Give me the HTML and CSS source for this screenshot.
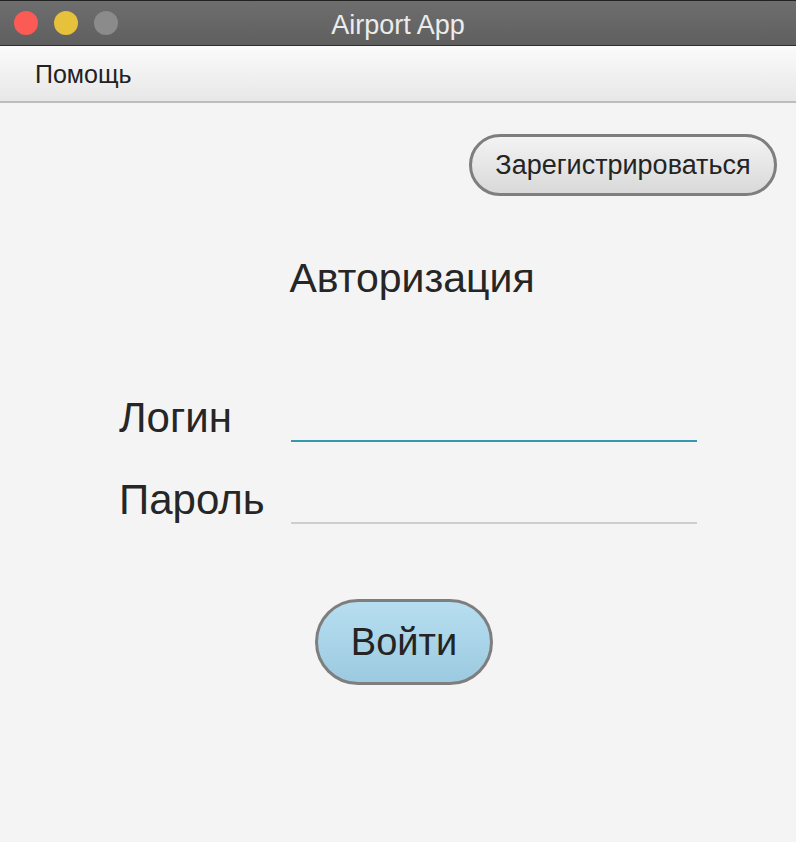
FILE: index.html
```html
<!DOCTYPE html>
<html lang="ru">
<head>
<meta charset="utf-8">
<title>Airport App</title>
<link rel="stylesheet" href="styles.css">
</head>
<body>
<div class="window">
  <header class="titlebar">
    <div class="lights">
      <span class="light red"></span>
      <span class="light yellow"></span>
      <span class="light gray"></span>
    </div>
    <div class="title">Airport App</div>
  </header>
  <nav class="menubar">
    <span class="menu-item">Помощь</span>
  </nav>
  <main class="content">
    <div class="top-row">
      <button class="btn btn-register" type="button">Зарегистрироваться</button>
    </div>
    <h1 class="heading">Авторизация</h1>
    <form class="form">
      <div class="field">
        <label class="label">Логин</label>
        <div class="input focused"></div>
      </div>
      <div class="field">
        <label class="label">Пароль</label>
        <div class="input"></div>
      </div>
    </form>
    <div class="actions">
      <button class="btn btn-login" type="button">Войти</button>
    </div>
  </main>
</div>
</body>
</html>
```

FILE: styles.css
```css
* { box-sizing: border-box; }
html, body { margin: 0; padding: 0; }
body {
  background: #f4f4f4;
  font-family: "Liberation Sans", Arial, sans-serif;
  color: #262626;
}
.window { width: 796px; height: 842px; background: #f4f4f4; }

.titlebar {
  height: 46px;
  background: linear-gradient(#6e6e6e, #5f5f5f);
  border-top: 1px solid #222;
  border-bottom: 1px solid #2e2e2e;
  display: flex;
  align-items: center;
  position: relative;
}
.lights { display: flex; gap: 16px; padding-left: 14px; }
.light { width: 24px; height: 24px; border-radius: 50%; display: block; }
.red { background: #fc5a55; }
.yellow { background: #e8c13c; }
.gray { background: #8b8b8b; }
.title {
  position: absolute;
  left: 0; right: 0; top: 0; bottom: 0;
  display: flex; align-items: center; justify-content: center;
  color: #ececec;
  font-size: 27px;
  padding-top: 4px;
  pointer-events: none;
}

.menubar {
  height: 57px;
  background: linear-gradient(#fbfbfb, #e7e7e7);
  border-bottom: 2px solid #bdbdbd;
  display: flex;
  align-items: center;
  padding-left: 35px;
}
.menu-item { font-size: 25px; color: #222; padding-top: 2px; }

.content { display: flex; flex-direction: column; }
.top-row { display: flex; justify-content: flex-end; padding: 31px 19px 0 0; }

.btn {
  font-family: "Liberation Sans", Arial, sans-serif;
  color: #242424;
  border: 3px solid #7e7e7e;
  cursor: pointer;
  padding: 0;
}
.btn-register {
  width: 308px; height: 62px;
  border-radius: 31px;
  background: linear-gradient(#f3f3f3, #d9d9d9);
  font-size: 27px;
}

.heading {
  margin: 57px 0 0 0;
  padding-left: 28px;
  text-align: center;
  font-weight: normal;
  font-size: 41px;
  line-height: 50px;
  color: #262626;
}

.form { display: flex; flex-direction: column; gap: 34px; padding-left: 119px; margin-top: 91px; }
.field { display: grid; grid-template-columns: 172px 406px; height: 48px; }
.label { font-size: 42px; line-height: 48px; color: #262626; }
.input { height: 48px; border-bottom: 2px solid #cdcdcd; }
.input.focused { border-bottom-color: #3797ae; }

.actions { display: flex; padding-left: 315px; margin-top: 75px; }
.btn-login {
  width: 178px; height: 86px;
  border-radius: 43px;
  background: linear-gradient(#b7def0, #9ccae0);
  font-size: 38px;
}
```
